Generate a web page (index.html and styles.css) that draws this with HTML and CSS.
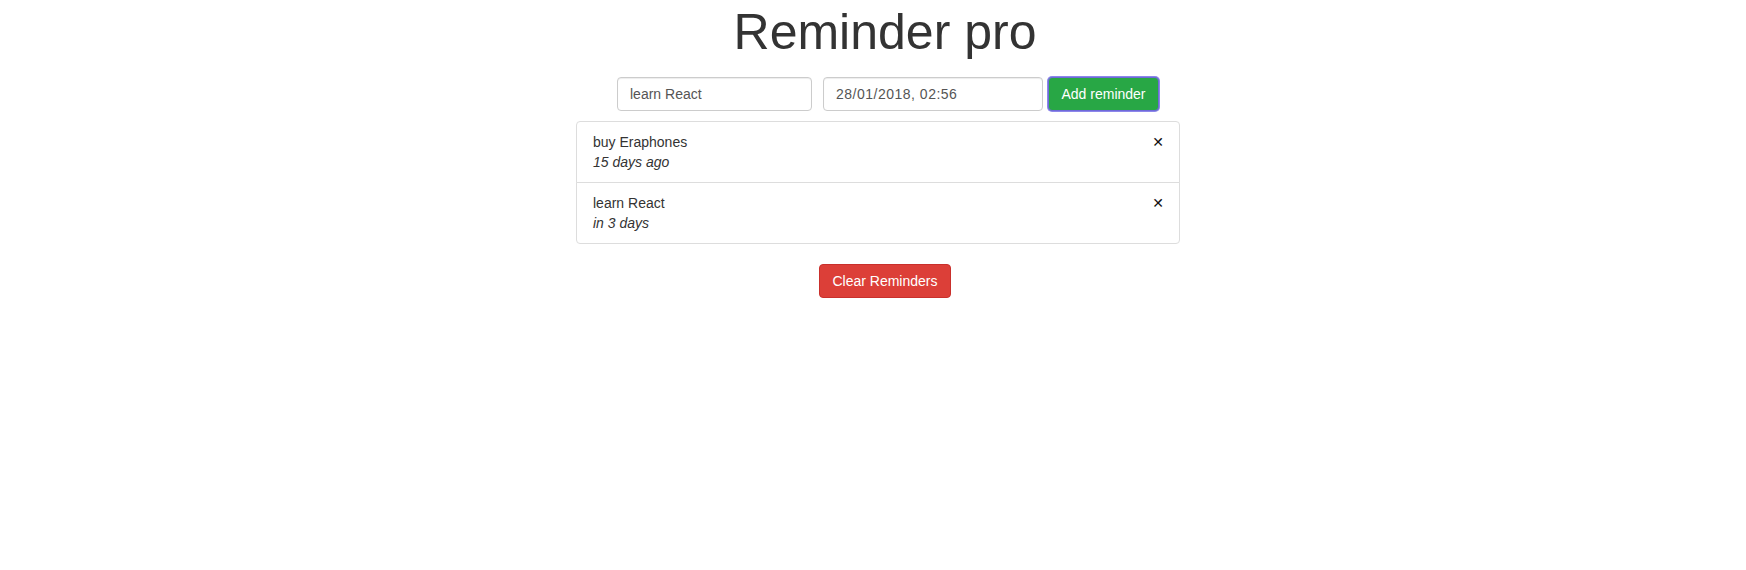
FILE: index.html
```html
<!DOCTYPE html>
<html>
<head>
<meta charset="utf-8">
<title>Reminder pro</title>
<link rel="stylesheet" href="styles.css">
</head>
<body>
<div class="app">
  <h1 class="title">Reminder pro</h1>
  <div class="form-row">
    <input class="form-control text-input" type="text" value="learn React">
    <input class="form-control date-input" type="text" value="28/01/2018, 02:56">
    <button class="btn btn-success btn-focus" type="button">Add reminder</button>
  </div>
  <ul class="list-group">
    <li class="list-item">
      <div class="item-body">
        <div class="item-text">buy Eraphones</div>
        <div class="item-date"><em>15 days ago</em></div>
      </div>
      <span class="close">✕</span>
    </li>
    <li class="list-item">
      <div class="item-body">
        <div class="item-text">learn React</div>
        <div class="item-date"><em>in 3 days</em></div>
      </div>
      <span class="close">✕</span>
    </li>
  </ul>
  <button class="btn btn-danger" type="button">Clear Reminders</button>
</div>
</body>
</html>
```
FILE: styles.css
```css
* { box-sizing: border-box; }
html, body { margin: 0; padding: 0; background: #fff; }
body {
  font-family: "Liberation Sans", Arial, sans-serif;
  font-size: 14px;
  line-height: 1.42857;
  color: #333;
}
.app {
  display: flex;
  flex-direction: column;
  align-items: center;
  padding-left: 24px;
}
.title {
  font-size: 50px;
  font-weight: 400;
  line-height: 1.1;
  margin: 5px 0 17px;
  color: #333;
}
.form-row {
  display: flex;
  align-items: center;
  margin-left: 6px;
}
.form-control {
  height: 34px;
  padding: 6px 12px;
  font-family: inherit;
  font-size: 14px;
  line-height: 1.42857;
  color: #555;
  background: #fff;
  border: 1px solid #ccc;
  border-radius: 4px;
  box-shadow: inset 0 1px 1px rgba(0,0,0,.075);
  outline: none;
}
.text-input { width: 195px; margin-right: 11px; }
.date-input { width: 220px; margin-right: 5px; letter-spacing: 0.5px; }
.btn {
  height: 34px;
  padding: 7px 12px 5px;
  font-family: inherit;
  font-size: 14px;
  line-height: 1.42857;
  border: 1px solid transparent;
  border-radius: 4px;
  color: #fff;
  white-space: nowrap;
  cursor: pointer;
}
.btn-success {
  background: #28a745;
  border-color: #23923d;
}
.btn-focus {
  box-shadow: 0 0 0 1px #8c86ea;
  border-color: #6f6ad8;
  width: 111px;
}
.btn-danger {
  background: #dc3f38;
  border-color: #c9302c;
}
.list-group {
  list-style: none;
  margin: 10px 14px 20px 0;
  padding: 0;
  width: 604px;
}
.list-item {
  display: flex;
  justify-content: space-between;
  align-items: flex-start;
  padding: 11px 15px 9px 16px;
  border: 1px solid #ddd;
  margin-bottom: -1px;
  background: #fff;
}
.list-item:first-child { border-radius: 4px 4px 0 0; }
.list-item:last-child { border-radius: 0 0 4px 4px; margin-bottom: 0; }
.item-date em { font-style: italic; }
.close {
  font-family: "DejaVu Sans", sans-serif;
  font-size: 14px;
  line-height: 20px;
  font-weight: bold;
  color: #111;
  margin-top: -1px;
}
```
